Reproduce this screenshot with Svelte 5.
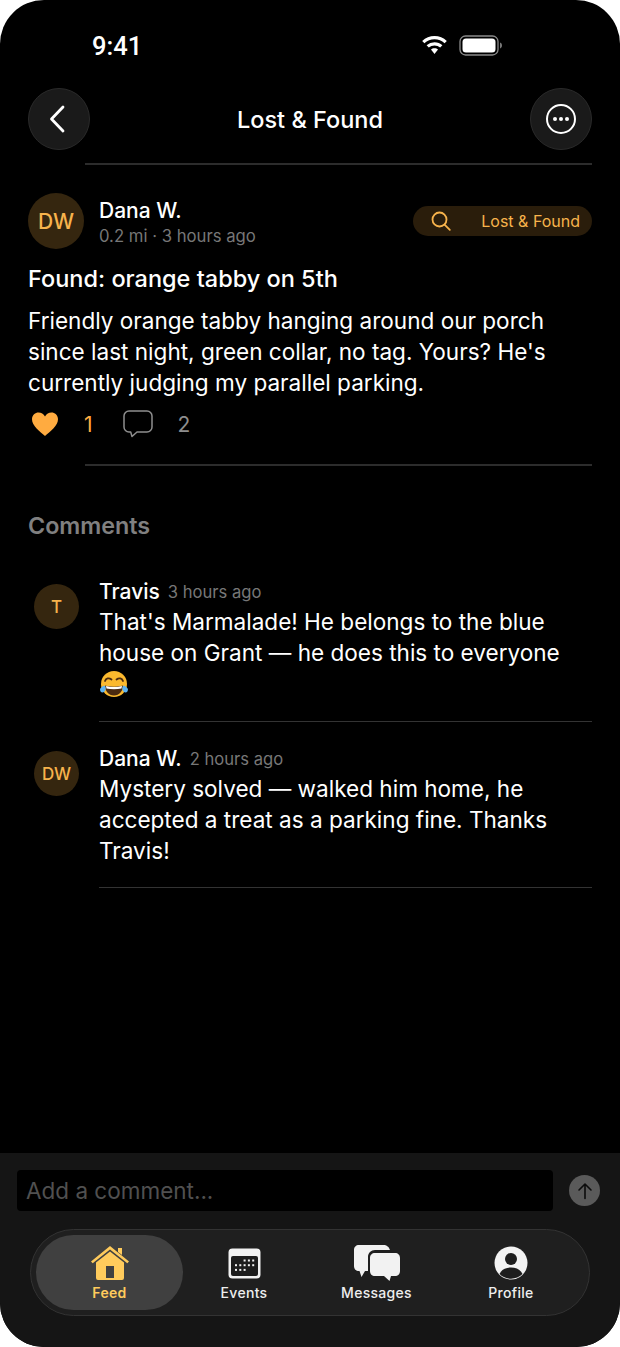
<script>
	const comments = [
		{
			initials: 'DW', name: 'Dana W.', time: '2 hours ago',
			body: 'Mystery solved — walked him home, he accepted a treat as a parking fine. Thanks Travis!'
		}
	];
	const tabs = ['Events', 'Messages', 'Profile'];
</script>

<div class="phone">
	<div class="status">
		<span class="clock">9:41</span>
		<div class="status-icons">
			<svg width="27" height="20" viewBox="0 0 27 20">
				<path d="M13.500 1c4.700 0 9 1.900 12.300 4.900l-2.200 2.300A15 15 0 0 0 13.500 4.200 15 15 0 0 0 3.400 8.200L1.200 5.900A18.200 18.200 0 0 1 13.500 1z" fill="#fff"/>
				<path d="M13.500 7.200c3 0 5.800 1.200 7.900 3.100l-2.200 2.300a8.500 8.500 0 0 0-5.700-2.200 8.500 8.500 0 0 0-5.700 2.200l-2.200-2.300a11.700 11.700 0 0 1 7.900-3.100z" fill="#fff"/>
				<path d="M13.500 13.300c1.400 0 2.600.5 3.500 1.300L13.500 19 10 14.600c.9-.8 2.100-1.300 3.500-1.300z" fill="#fff"/>
			</svg>
			<svg width="45" height="21" viewBox="0 0 45 21">
				<rect x="1" y="1" width="38" height="19" rx="5.500" fill="none" stroke="#8a8a8a" stroke-width="1.300"/>
				<rect x="3.500" y="3.500" width="33" height="14" rx="3.500" fill="#fff"/>
				<path d="M41 7.500c1.300.4 2 1.600 2 3s-.7 2.600-2 3z" fill="#777"/>
			</svg>
		</div>
	</div>

	<header class="nav">
		<button class="round" aria-label="Back">
			<svg class="chevron" width="24" height="32" viewBox="0 0 24 32" fill="none" stroke="#fff" stroke-width="2.800" stroke-linecap="round" stroke-linejoin="round">
				<path d="M17 4 5.500 16 17 28"/>
			</svg>
		</button>
		<h1>Lost &amp; Found</h1>
		<button class="round" aria-label="More">
			<svg width="32" height="32" viewBox="0 0 32 32">
				<circle cx="16" cy="16" r="14" fill="none" stroke="#fff" stroke-width="2"/>
				<circle cx="10" cy="16" r="2" fill="#fff"/>
				<circle cx="16" cy="16" r="2" fill="#fff"/>
				<circle cx="22" cy="16" r="2" fill="#fff"/>
			</svg>
		</button>
	</header>
	<div class="rule nav-rule"></div>

	<article class="post">
		<div class="author">
			<div class="avatar big">DW</div>
			<div class="who">
				<div class="name">Dana W.</div>
				<div class="meta">0.2 mi · 3 hours ago</div>
			</div>
			<div class="tag">
				<svg width="22" height="22" viewBox="0 0 22 22" fill="none" stroke="#f7b34c" stroke-width="1.800" stroke-linecap="round">
					<circle cx="9.500" cy="9.500" r="7"/>
					<path d="m14.800 14.800 5 5"/>
				</svg>
				<span>Lost &amp; Found</span>
			</div>
		</div>
		<h2>Found: orange tabby on 5th</h2>
		<p class="text">Friendly orange tabby hanging around our porch since last night, green collar, no tag. Yours? He's currently judging my parallel parking.</p>
		<div class="actions">
			<svg width="28" height="26" viewBox="0 0 28 26">
				<path d="M14 25C9 20.500 1 15 1 8.300 1 4 4.300 1.500 7.500 1.500c2.800 0 5 1.500 6.500 4 1.500-2.500 3.700-4 6.500-4C23.700 1.500 27 4 27 8.300 27 15 19 20.500 14 25z" fill="#ffab40"/>
			</svg>
			<span class="count liked">1</span>
			<svg class="bubble" width="30" height="28" viewBox="0 0 30 28" fill="none" stroke="#8e8e8e" stroke-width="1.500" stroke-linejoin="round">
				<path d="M6 1h18a5 5 0 0 1 5 5v11a5 5 0 0 1-5 5H14l-5 4.500-1.300-4.500H6a5 5 0 0 1-5-5V6a5 5 0 0 1 5-5z"/>
			</svg>
			<span class="count">2</span>
		</div>
	</article>
	<div class="rule post-rule"></div>

	<h3 class="section">Comments</h3>

	<section class="comments">
		<div class="comment">
			<div class="avatar">T</div>
			<div class="body">
				<div class="line"><span class="c-name">Travis</span><span class="c-time">3 hours ago</span></div>
				<p class="text">That's Marmalade! He belongs to the blue house on Grant — he does this to everyone</p>
				<svg class="emoji" width="30" height="28" viewBox="0 0 30 28">
					<circle cx="15" cy="14" r="13" fill="#fbb92e"/>
					<path d="M6 15.500c5 1.500 13 1.500 18 0 0 5.500-3.500 10-9 10s-9-4.500-9-10z" fill="#4a2a10"/>
					<path d="M7 16c5 1.300 11 1.300 16 0l-.5 2.500c-4.500 1-10.500 1-15 0z" fill="#fff"/>
					<path d="M6 11c1-3 4-3.500 6.500-1.500M24 11c-1-3-4-3.500-6.500-1.500" fill="none" stroke="#4a2a10" stroke-width="1.800" stroke-linecap="round"/>
					<path d="M1 19c2-3 4-3.500 5-3 1 1.500 1 4-.5 5.500S1 23 1 19zM29 19c-2-3-4-3.500-5-3-1 1.500-1 4 .5 5.500s4.500 1.500 4.500-2.500z" fill="#5cb3f2"/>
				</svg>
			</div>
		</div>
		{#each comments as c}
			<div class="comment">
				<div class="avatar">{c.initials}</div>
				<div class="body">
					<div class="line"><span class="c-name">{c.name}</span><span class="c-time">{c.time}</span></div>
					<p class="text">{c.body}</p>
				</div>
			</div>
		{/each}
	</section>

	<footer class="dock">
		<div class="composer">
			<div class="field">Add a comment...</div>
			<button class="send" aria-label="Send">
				<svg width="18" height="20" viewBox="0 0 18 20" fill="none" stroke="#0c0c0c" stroke-width="1.600" stroke-linecap="round" stroke-linejoin="round">
					<path d="M9 17.500V3M3 9l6-6 6 6"/>
				</svg>
			</button>
		</div>
		<nav class="tabs">
			<div class="tab active">
				<div class="tab-icon">
					<svg width="40" height="36" viewBox="0 0 40 36" fill="#ffcb5c">
						<path d="M28 3h4v7l-4-3z"/>
						<path d="M20 1 1 16.500l1.700 1.800L20 4.500l17.300 13.800 1.700-1.800z"/>
						<path d="M20 6.500 6 17.500V33a2 2 0 0 0 2 2h24a2 2 0 0 0 2-2V17.500zM16 21h8v12h-8z" fill-rule="evenodd"/>
					</svg>
				</div>
				<span>Feed</span>
			</div>
			{#each tabs as label}
				<div class="tab">
					<div class="tab-icon">
						{#if label === 'Events'}
							<svg width="33" height="31" viewBox="0 0 33 31">
								<rect x="0.500" y="0.500" width="32" height="30" rx="4" fill="#f2f2f2"/>
								<rect x="3" y="8" width="27" height="20" rx="2" fill="#1d1d1d"/>
								{#each [0, 1, 2] as row}
									{#each [0, 1, 2, 3, 4] as col}
										{#if !(row === 0 && col < 2) && !(row === 2 && col > 2)}
											<rect x={7 + col * 4.300} y={11.500 + row * 4.700} width="2" height="2" fill="#f2f2f2"/>
										{/if}
									{/each}
								{/each}
							</svg>
						{:else if label === 'Messages'}
							<svg width="48" height="38" viewBox="0 0 48 38">
								<path d="M6 1h24c4 0 6 2 7 5H22c-4 0-7 3-7 7v14h-3l-3.500 6L6.500 27H6c-3 0-5-2-5-5V6c0-3 2-5 5-5z" fill="#f2f2f2"/>
								<path d="M22 9h20c3 0 5 2 5 5v13c0 3-2 5-5 5h-4l-1.500 5-5.500-5H22c-3 0-5-2-5-5V14c0-3 2-5 5-5z" fill="#f2f2f2"/>
							</svg>
						{:else}
							<svg width="34" height="34" viewBox="0 0 34 34">
								<circle cx="17" cy="17" r="16.500" fill="#f2f2f2"/>
								<circle cx="17" cy="13" r="6" fill="#1d1d1d"/>
								<path d="M5.500 28c2-4.500 6.500-6.500 11.500-6.500S26.500 23.500 28.500 28a16.500 16.500 0 0 1-23 0z" fill="#1d1d1d"/>
							</svg>
						{/if}
					</div>
					<span>{label}</span>
				</div>
			{/each}
		</nav>
	</footer>
</div>

<style>
	:global(body) {
		background: #fff;
	}
	.phone {
		position: relative;
		width: 620px;
		height: 1347px;
		background: #000;
		border-radius: 44px;
		overflow: hidden;
		color: #fff;
		font-family: Inter, 'Liberation Sans', sans-serif;
		display: flex;
		flex-direction: column;
	}
	.status {
		height: 88px;
		flex: none;
		display: flex;
		align-items: center;
		justify-content: space-between;
		padding: 0 116px 0 92px;
		box-sizing: border-box;
	}
	.clock {
		font: 500 25.500px Roboto, sans-serif;
		margin-top: 4px;
	}
	.status-icons {
		display: flex;
		align-items: center;
		gap: 11px;
		margin-top: 2px;
	}
	.nav {
		flex: none;
		height: 62px;
		padding: 0 28px;
		display: flex;
		align-items: center;
		justify-content: space-between;
	}
	.nav h1 {
		margin: 0;
		font-size: 23.500px;
		font-weight: 500;
	}
	.round {
		width: 62px;
		height: 62px;
		border-radius: 50%;
		border: 1px solid #2a2a2a;
		background: #1a1a1a;
		padding: 0;
		display: flex;
		align-items: center;
		justify-content: center;
	}
	.chevron {
		margin-right: 2px;
	}
	.rule {
		height: 2px;
		background: #2c2c2c;
		margin: 0 28px 0 85px;
		flex: none;
	}
	.nav-rule {
		margin-top: 13px;
	}
	.post {
		padding: 27px 28px 0;
		height: 299px;
		box-sizing: border-box;
		flex: none;
	}
	.author {
		display: flex;
		align-items: center;
		height: 58px;
	}
	.avatar {
		width: 45px;
		height: 45px;
		border-radius: 50%;
		background: #35260f;
		color: #f7b34c;
		display: flex;
		align-items: center;
		justify-content: center;
		font-size: 17px;
		font-weight: 500;
		flex: none;
	}
	.avatar.big {
		width: 56px;
		height: 56px;
		font-size: 21px;
	}
	.who {
		margin: 4px 0 0 15px;
		flex: 1;
	}
	.name {
		font-size: 21px;
		font-weight: 500;
		line-height: 26px;
	}
	.meta {
		font-size: 16.700px;
		color: #777;
		line-height: 24px;
	}
	.tag {
		height: 30px;
		width: 179px;
		box-sizing: border-box;
		border-radius: 15px;
		background: #2a1d0b;
		display: flex;
		align-items: center;
		justify-content: space-between;
		padding: 0 12px 0 17px;
		color: #f7b34c;
		font-size: 16px;
	}
	.post h2 {
		margin: 14px 0 0;
		font-size: 23.500px;
		font-weight: 500;
		line-height: 30px;
	}
	.text {
		margin: 0;
		font-size: 22.550px;
		line-height: 31px;
	}
	.post .text {
		margin-top: 11px;
	}
	.actions {
		display: flex;
		align-items: center;
		margin-top: 9px;
		height: 34px;
		padding-left: 3px;
	}
	.count {
		font-size: 21px;
		color: #8e8e8e;
		margin-left: 25px;
	}
	.count.liked {
		color: #ffab40;
	}
	.bubble {
		margin-left: 30px;
	}
	.section {
		margin: 45px 0 0 28px;
		font-size: 23.300px;
		font-weight: 600;
		line-height: 30px;
		color: #808080;
	}
	.comments {
		margin-top: 36px;
		padding: 0 28px 0 34px;
	}
	.comment {
		display: flex;
		gap: 20px;
		margin-bottom: 22px;
	}
	.comment .avatar {
		margin-top: 7px;
	}
	.body {
		flex: 1;
		border-bottom: 1px solid #333;
		padding-bottom: 21px;
	}
	.line {
		display: flex;
		align-items: center;
		gap: 8px;
		height: 29px;
	}
	.c-name {
		font-size: 21px;
		font-weight: 500;
	}
	.c-time {
		font-size: 16.600px;
		color: #777;
	}
	.emoji {
		display: block;
		margin: 2px 0 2px;
	}
	.dock {
		position: absolute;
		left: 0;
		right: 0;
		bottom: 0;
		height: 194px;
		background: #151515;
		padding: 17px 0 0;
		box-sizing: border-box;
	}
	.composer {
		display: flex;
		align-items: center;
		padding: 0 20px 0 17px;
		gap: 16px;
	}
	.field {
		flex: 1;
		height: 41px;
		box-sizing: border-box;
		background: #000;
		border-radius: 4px;
		color: #505050;
		font-size: 22.500px;
		padding-left: 9px;
		line-height: 41px;
	}
	.send {
		width: 31px;
		height: 31px;
		border-radius: 50%;
		border: 0;
		padding: 0;
		background: #5a5a5a;
		display: flex;
		align-items: center;
		justify-content: center;
	}
	.tabs {
		margin: 18px 30px 0;
		height: 87px;
		box-sizing: border-box;
		border-radius: 44px;
		border: 1.500px solid #333;
		background: #1f1f1f;
		padding: 5px 15px 5px 5px;
		display: grid;
		grid-template-columns: 147px 122px 143px 1fr;
	}
	.tab {
		display: flex;
		flex-direction: column;
		align-items: center;
		padding-top: 9px;
		font-size: 14px;
		font-weight: 500;
		color: #eee;
		letter-spacing: .3px;
	}
	.tab-icon {
		height: 38px;
		display: flex;
		align-items: center;
		margin-bottom: 2px;
	}
	.tab.active {
		background: #404040;
		border-radius: 38px;
		color: #ffcb5c;
		font-weight: 600;
	}
</style>
